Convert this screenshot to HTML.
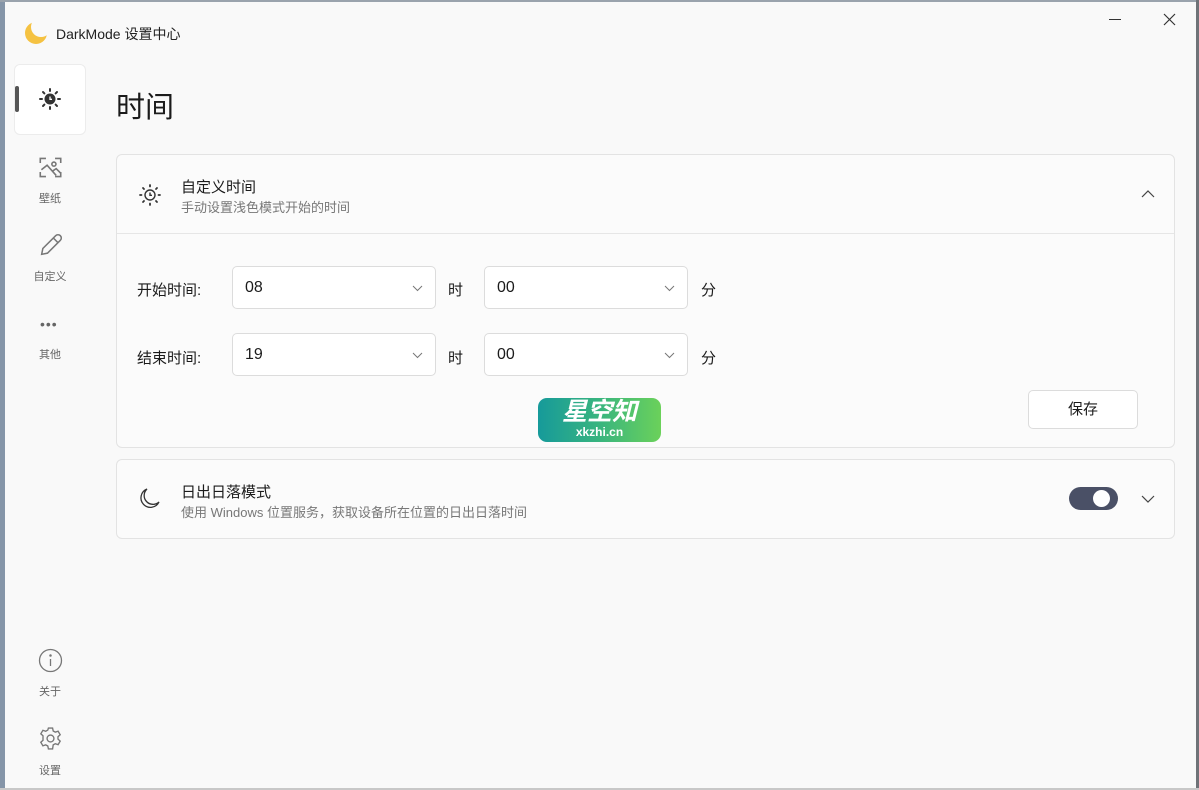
<!DOCTYPE html>
<html><head><meta charset="utf-8"><style>
*{margin:0;padding:0;box-sizing:border-box}
body{width:1199px;height:790px;overflow:hidden;background:#f9f9f9;font-family:"Liberation Sans","Noto Sans CJK SC",sans-serif;color:#1b1b1b;position:relative}
.lb{position:absolute;left:0;top:0;width:5px;height:790px;background:#8595a8}
.tb{position:absolute;left:0;top:0;width:1199px;height:2px;background:#9aa3ad}
.rb{position:absolute;right:0;top:0;width:3px;height:790px;background:#6f7378}
.bb{position:absolute;left:0;bottom:0;width:1199px;height:2px;background:#c8c8c8}
.abs{position:absolute}
.nav{position:absolute;left:14px;width:72px;text-align:center;font-size:11px;color:#666}
.card{position:absolute;left:116px;width:1059px;background:#fbfbfb;border:1px solid #e3e3e3;border-radius:6px}
.sel{position:absolute;width:204px;height:43px;background:#fff;border:1px solid #dcdcdc;border-radius:5px;font-size:16px;padding:12px 12px;color:#1b1b1b}
.sel svg{position:absolute;right:12px;top:18px}
.lbl{position:absolute;font-size:15px;color:#1b1b1b}
</style></head><body>
<div class="lb"></div><div class="tb"></div><div class="rb"></div><div class="bb"></div>
<svg class="abs" style="left:24px;top:20px" width="26" height="26" viewBox="0 0 26 26"><mask id="m"><rect width="26" height="26" fill="#fff"/><circle cx="17" cy="7" r="10" fill="#000"/></mask><circle cx="12" cy="13" r="11" fill="#f5c242" mask="url(#m)"/></svg>
<div class="abs" style="left:56px;top:24px;font-size:14px;color:#222">DarkMode 设置中心</div>
<div class="abs" style="left:1109px;top:19px;width:12px;height:1px;background:#333"></div>
<svg class="abs" style="left:1163px;top:13px" width="13" height="13" viewBox="0 0 13 13"><path d="M1 1L12 12M12 1L1 12" stroke="#333" stroke-width="1.2"/></svg>
<div class="abs" style="left:14px;top:64px;width:72px;height:71px;background:#fff;border:1px solid #ececec;border-radius:6px"></div>
<div class="abs" style="left:15px;top:86px;width:4px;height:26px;background:#555;border-radius:2px"></div>
<svg class="abs" style="left:38px;top:87px" width="24" height="24" viewBox="0 0 24 24"><circle cx="12" cy="12" r="5.5" fill="#333"/><path d="M12 9.5v2.8h2" stroke="#fff" stroke-width="1.3" fill="none"/><g stroke="#333" stroke-width="2" stroke-linecap="round"><path d="M12 2v2M12 20v2M2 12h2M20 12h2M5 5l1.4 1.4M17.6 17.6L19 19M5 19l1.4-1.4M17.6 6.4L19 5"/></g></svg>
<svg class="abs" style="left:38px;top:155px" width="25" height="25" viewBox="0 0 22 22" fill="none" stroke="#777" stroke-width="1.4"><path d="M2 7V3h5M15 3h5v4M2 15v4h5M20 15v4h-5"/><circle cx="14" cy="8" r="1.8"/><path d="M3 13l5-4 8 9M13 14l3-2 4 4"/></svg>
<div class="nav" style="top:190px">壁纸</div>
<svg class="abs" style="left:37px;top:231px" width="28" height="28" viewBox="0 0 24 24" fill="none" stroke="#777" stroke-width="1.3"><path d="M4 20l1-5L16 4a2.5 2.5 0 0 1 4 4L9 19z M14 6l4 4"/></svg>
<div class="nav" style="top:268px">自定义</div>
<div class="abs" style="left:40px;top:321px;font-size:14px;color:#666;letter-spacing:1px;line-height:6px">•••</div>
<div class="nav" style="top:346px">其他</div>
<svg class="abs" style="left:38px;top:648px" width="25" height="25" viewBox="0 0 25 25" fill="none" stroke="#777" stroke-width="1.3"><circle cx="12.5" cy="12.5" r="11"/><path d="M12.5 11v7"/><circle cx="12.5" cy="7.5" r="0.6" fill="#777"/></svg>
<div class="nav" style="top:683px">关于</div>
<svg class="abs" style="left:38px;top:726px" width="25" height="25" viewBox="0 0 24 24" fill="none" stroke="#777" stroke-width="1.3"><path d="M10 2h4l.6 2.8 2 1.1 2.7-.9 2 3.4-2.1 1.9v2.3l2.1 1.9-2 3.4-2.7-.9-2 1.1L14 22h-4l-.6-2.8-2-1.1-2.7.9-2-3.4 2.1-1.9V9.4L2.7 7.5l2-3.4 2.7.9 2-1.1z"/><circle cx="12" cy="12" r="3.3"/></svg>
<div class="nav" style="top:762px">设置</div>
<div class="abs" style="left:116px;top:84px;font-size:29px;color:#1b1b1b">时间</div>
<div class="card" style="top:154px;height:294px">
 <div style="position:absolute;left:0;top:78px;width:100%;height:1px;background:#e6e6e6"></div>
 <svg class="abs" style="left:21px;top:28px" width="24" height="24" viewBox="0 0 24 24" fill="none" stroke="#333" stroke-width="1.4"><circle cx="12" cy="12" r="5"/><path d="M12 9.5v2.8h2"/><g stroke-width="1.8" stroke-linecap="round"><path d="M12 2v1.5M12 20.5v1.5M2 12h1.5M20.5 12h1.5M5 5l1 1M18 18l1 1M5 19l1-1M18 6l1-1"/></g></svg>
 <div class="abs" style="left:64px;top:21px;font-size:15px">自定义时间</div>
 <div class="abs" style="left:64px;top:42px;font-size:13px;color:#777">手动设置浅色模式开始的时间</div>
 <svg class="abs" style="left:1024px;top:34px" width="14" height="9" viewBox="0 0 14 9"><path d="M1 8l6-6 6 6" stroke="#444" fill="none" stroke-width="1.2"/></svg>
 <div class="lbl" style="left:20px;top:124px">开始时间:</div>
 <div class="sel" style="left:115px;top:111px">08<svg width="11" height="7" viewBox="0 0 11 7"><path d="M1 1l4.5 4.5L10 1" stroke="#777" fill="none"/></svg></div>
 <div class="lbl" style="left:331px;top:124px">时</div>
 <div class="sel" style="left:367px;top:111px">00<svg width="11" height="7" viewBox="0 0 11 7"><path d="M1 1l4.5 4.5L10 1" stroke="#777" fill="none"/></svg></div>
 <div class="lbl" style="left:584px;top:124px">分</div>
 <div class="lbl" style="left:20px;top:192px">结束时间:</div>
 <div class="sel" style="left:115px;top:178px">19<svg width="11" height="7" viewBox="0 0 11 7"><path d="M1 1l4.5 4.5L10 1" stroke="#777" fill="none"/></svg></div>
 <div class="lbl" style="left:331px;top:192px">时</div>
 <div class="sel" style="left:367px;top:178px">00<svg width="11" height="7" viewBox="0 0 11 7"><path d="M1 1l4.5 4.5L10 1" stroke="#777" fill="none"/></svg></div>
 <div class="lbl" style="left:584px;top:192px">分</div>
 <div class="abs" style="left:911px;top:235px;width:110px;height:39px;background:#fff;border:1px solid #dcdcdc;border-radius:5px;font-size:15px;text-align:center;line-height:37px">保存</div>
</div>
<div class="abs" style="left:538px;top:398px;width:123px;height:44px;border-radius:9px;background:linear-gradient(90deg,#169a9a,#39b57f,#6bd15a);color:#fff;text-align:center">
 <div style="font-size:25px;font-weight:bold;line-height:28px;font-style:italic">星空知</div>
 <div style="font-size:12px;font-weight:bold;line-height:12px">xkzhi.cn</div>
</div>
<div class="card" style="top:459px;height:80px">
 <svg class="abs" style="left:21px;top:26px" width="24" height="24" viewBox="0 0 24 24"><path d="M9 3 A9.5 9.5 0 1 0 21 16 A8.5 8.5 0 0 1 9 3Z" fill="none" stroke="#333" stroke-width="1.3"/></svg>
 <div class="abs" style="left:64px;top:21px;font-size:15px">日出日落模式</div>
 <div class="abs" style="left:64px;top:42px;font-size:13px;color:#777">使用 Windows 位置服务，获取设备所在位置的日出日落时间</div>
 <div class="abs" style="left:952px;top:27px;width:49px;height:23px;border-radius:12px;background:#4a5066"></div>
 <div class="abs" style="left:976px;top:30px;width:17px;height:17px;border-radius:50%;background:#fff"></div>
 <svg class="abs" style="left:1024px;top:35px" width="14" height="9" viewBox="0 0 14 9"><path d="M1 1l6 6 6-6" stroke="#444" fill="none" stroke-width="1.2"/></svg>
</div>
</body></html>
